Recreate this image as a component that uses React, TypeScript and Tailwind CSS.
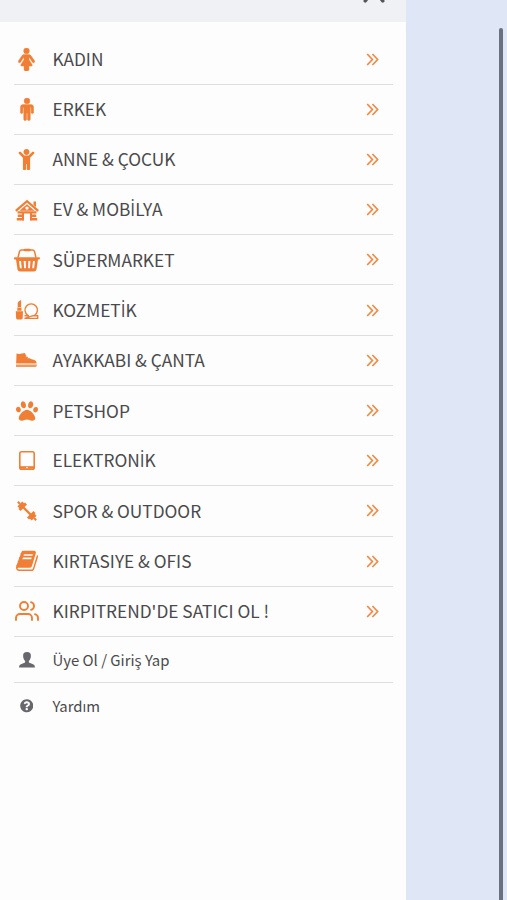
import { Fragment, type ReactNode } from 'react';
import { FaChild, FaPaw, FaQuestionCircle } from 'react-icons/fa';

const head = (cx: number) => <circle cx={cx} cy="224" r="224" />;

const Female = () => (
  <svg viewBox="0 0 1280 1792" className="h-[23px] w-[17px]" fill="currentColor" stroke="currentColor" strokeWidth="30">
    <path d="M1280 1056q0 40-28 68t-68 28q-51 0-80-43L877 768h-45v132l247 411q9 15 9 33 0 26-19 45t-45 19H832v272q0 46-33 79t-79 33H560q-46 0-79-33t-33-79v-272H256q-26 0-45-19t-19-45q0-18 9-33l247-411V768h-45l-227 341q-29 43-80 43-40 0-68-28t-28-68q0-29 16-53l256-384q73-107 176-107h384q103 0 176 107l256 384q16 24 16 53z" />
    {head(640)}
  </svg>
);

const Male = () => (
  <svg viewBox="0 0 1024 1792" className="h-[23px] w-[14px]" fill="currentColor" stroke="currentColor" strokeWidth="30">
    <path d="M1024 704v416q0 40-28 68t-68 28-68-28-28-68V736h-64v912q0 46-33 79t-79 33-79-33-33-79v-464h-64v464q0 46-33 79t-79 33-79-33-33-79V736h-64v384q0 40-28 68t-68 28-68-28-28-68V704q0-80 56-136t136-56h640q80 0 136 56t56 136z" />
    {head(512)}
  </svg>
);

const House = () => (
  <svg viewBox="0 0 24 22" className="h-[22px] w-6" fill="none" stroke="currentColor">
    <path d="M.8 11.800L12 2.200l11.200 9.600" strokeWidth="2.200" />
    <path d="M18.500 2.500H21v5.500l-2.500-2z" fill="currentColor" stroke="none" />
    <path fill="currentColor" stroke="none" fillRule="evenodd" d="M12 5.200l7.600 6.600H4.400zM12 7.400a1.700 1.700 0 1 0 0 3.400 1.700 1.700 0 1 0 0-3.400z" />
    <path d="M2.500 13.400h19M2.800 16.800H9m6 0h6.200M1.800 20.200H9m6 0h7.200" strokeWidth="2.400" />
    <path d="M8 13v8.300M16 13v8.300" strokeWidth="2" />
  </svg>
);

const Basket = () => (
  <svg viewBox="0 0 26 24" className="h-6 w-[26px]" fill="none" stroke="currentColor">
    <path d="M4 9.500L5.500 3.500Q6 2 7.500 2h11q1.500 0 2 1.500l1.500 6" strokeWidth="1.500" />
    <path d="M11 2h4.500" strokeWidth="2.600" strokeLinecap="round" />
    <path fill="currentColor" stroke="none" fillRule="evenodd" d="M1 9.300h24q1 0 1 1.100t-1 1.200h-1l-1.500 9.900Q22 23.500 20 23.500H6q-2 0-2.500-2L2 11.600H1q-1 0-1-1.200t1-1.100zM5 13l.9 7.200h1.900L7 13zM9.700 13l.4 7.200H12l-.2-7.200zM14.300 13l-.2 7.200H16l.4-7.200zM19 13l-.8 7.200h1.900l.9-7.200z" />
  </svg>
);

const Cosmetics = () => (
  <svg viewBox="0 0 24 20" className="h-5 w-6" fill="none" stroke="currentColor">
    <path d="M2.700 7V3q0-1.700 3.400-3v7zM2.300 7.600h4.200v3.200H2.300zM.8 11.300H8l-.3 6.700q-.2 1.500-1.700 1.500H2.800q-1.500 0-1.700-1.500z" fill="currentColor" stroke="none" />
    <path d="M12.800 15.300a6.200 6.200 0 1 1 6.800 0M9.500 15.700h4.500m4 0h4.700v2.700H9.500z" strokeWidth="1.400" />
  </svg>
);

const Shoe = () => (
  <svg viewBox="0 0 21 15" className="mr-[1px] h-[15px] w-[21px]" fill="currentColor">
    <path d="M.5.500Q2.500 1.300 4.500.700L8.800 0q.5 1.500 1.800 3l-1 .7.400.400 1.300-.6 1 .9-1 .7.500.400 1.200-.5q2.500 1.600 5.500 1.900 2 .5 2.200 3.700H0L.3 7.500z" />
    <path d="M0 11h20.700v1.400q0 1.600-1.600 1.600H0z" opacity=".8" />
    <path d="M0 11.300h20.500" stroke="white" strokeWidth=".6" />
  </svg>
);

const Tablet = () => (
  <svg viewBox="0 0 16 19" className="mb-[1px] h-[19px] w-4" fill="none" stroke="currentColor">
    <rect x=".8" y=".8" width="14.400" height="17.400" rx="1.800" strokeWidth="1.600" />
    <path d="M1 16.500h14" strokeWidth="2.600" />
    <path d="M7 16.600h2" stroke="white" strokeWidth=".9" />
  </svg>
);

const Dumbbell = () => (
  <svg viewBox="0 0 20 20" className="size-5" fill="none" stroke="currentColor">
    <path d="M4 4l12 12" strokeWidth="2.300" />
    <path d="M2.500 9L9 2.500M11 17.500l6.500-6.500" strokeWidth="2.900" />
    <path d="M1.600 6.400L6.400 1.600M13.600 18.400l4.800-4.800" strokeWidth="3.200" />
    <path d="M.8.800L3 3M17 17l2.200 2.200" strokeWidth="2" />
  </svg>
);

const Book = () => (
  <svg viewBox="0 0 1664 1664" className="size-[22px]" fill="currentColor">
    <path fillRule="evenodd" d="M1639 410q40 57 18 129l-275 906q-19 64-76.500 107.500T1183 1596H260q-77 0-148.500-53.500T12 1411q-24-67-2-127 0-4 3-27t4-37q1-8-3-21.500t-3-19.500q2-11 8-21t16.500-23.500T52 1111q23-38 45-91.500t30-91.500q3-10 .5-30t-.5-28q3-11 17-28t17-23q21-36 42-92t25-90q1-9-2.500-32t.5-28q4-13 22-30.500t22-22.500q19-26 42.500-84.500T340 343q1-8-3-25.500t-2-26.500q2-8 9-18t18-23 17-21q8-12 16.500-30.500t15-35 16-36 19.500-32 26.500-23.500 36-11.500 47.500 5.500l-1 3q38-9 51-9h761q74 0 114 56t18 130l-274 906q-36 119-71.500 153.500T1025 1340H156q-27 0-38 15-11 16-1 43 24 70 144 70h923q29 0 56-15.500t35-41.500l300-987q7-22 5-57 38 15 59 43zM575 412q-4 13 2 22.500t20 9.500h608q13 0 25.500-9.500T1247 412l21-64q4-13-2-22.500t-20-9.500H638q-13 0-25.500 9.500T596 348zm-83 256q-4 13 2 22.500t20 9.500h608q13 0 25.500-9.500T1164 668l21-64q4-13-2-22.500t-20-9.500H555q-13 0-25.500 9.500T513 604z" />
  </svg>
);

const Users = () => (
  <svg viewBox="0 0 24 24" className="size-6" fill="none" stroke="currentColor" strokeWidth="1.900" strokeLinecap="round" strokeLinejoin="round">
    <path d="M17 21v-2a4 4 0 0 0-4-4H5a4 4 0 0 0-4 4v2M23 21v-2a4 4 0 0 0-3-3.870M16 3.130a4 4 0 0 1 0 7.750" />
    <circle cx="9" cy="7" r="4" />
  </svg>
);

const Person = () => (
  <svg viewBox="0 0 16 16" className="size-4" fill="currentColor">
    <path d="M8 0C5.300 0 3.900 1.500 4.100 4c.1 2 .8 3.700 2 4.900.2 1.300-.1 1.800-1.200 2.200L2 12.200C.7 12.700.1 13.500.1 15.500h15.800c0-2-.6-2.800-1.900-3.300l-2.900-1.100c-1.100-.4-1.400-.9-1.200-2.200 1.200-1.200 1.900-2.900 2-4.900C12.100 1.500 10.700 0 8 0z" />
  </svg>
);

const Chevrons = () => (
  <svg viewBox="0 0 13 13" className="mr-[14.500px] size-[13px] text-[#f08a45]" fill="none" stroke="currentColor" strokeWidth="1.700">
    <path d="M1.200 1l5.200 5.500L1.200 12M6.400 1l5.200 5.500L6.400 12" />
  </svg>
);

// The CJK family has no dotted capital I, so that letter is set in Open Sans.
const Label = ({ text }: { text: string }) => (
  <>
    {text.split('İ').map((part, i) => (
      <Fragment key={i}>
        {i > 0 && <span className="font-['Open_Sans',sans-serif]">İ</span>}
        {part}
      </Fragment>
    ))}
  </>
);

const categories: { label: string; icon: ReactNode }[] = [
  { label: 'KADIN', icon: <Female /> },
  { label: 'ERKEK', icon: <Male /> },
  { label: 'ANNE & ÇOCUK', icon: <FaChild size={21} /> },
  { label: 'EV & MOBİLYA', icon: <House /> },
  { label: 'SÜPERMARKET', icon: <Basket /> },
  { label: 'KOZMETİK', icon: <Cosmetics /> },
  { label: 'AYAKKABI & ÇANTA', icon: <Shoe /> },
  { label: 'PETSHOP', icon: <FaPaw size={22} /> },
  { label: 'ELEKTRONİK', icon: <Tablet /> },
  { label: 'SPOR & OUTDOOR', icon: <Dumbbell /> },
  { label: 'KIRTASIYE & OFIS', icon: <Book /> },
  { label: "KIRPITREND'DE SATICI OL !", icon: <Users /> },
];

export default function App() {
  return (
    <div className="flex h-[900px] w-[507px] overflow-hidden bg-[#dfe6f6] font-['Noto_Sans_CJK_SC','Open_Sans',sans-serif] text-[#4a4a4c]">
      <aside className="flex w-[406px] flex-col bg-[#fdfdfd]">
        <header className="flex h-[22px] shrink-0 items-start justify-end bg-[#f0f1f5] pr-5">
          <svg viewBox="0 0 24 4" className="h-1 w-6" fill="none" stroke="#55565a" strokeWidth="3.400" strokeLinecap="round">
            <path d="M5.500-2L3.200 1M18.500-2L20.800 1" />
          </svg>
        </header>
        <nav className="ml-[13.500px] mr-[13px] mt-[12.400px]">
          {categories.map(({ label, icon }) => (
            <div key={label} className="flex h-[50.220px] items-center border-b-[1.500px] border-[#dedee1]">
              <span className="flex w-[26px] shrink-0 justify-center text-[#f07f35]">{icon}</span>
              <span className="ml-[13px] flex-1 whitespace-nowrap text-[17.300px] leading-6"><Label text={label} /></span>
              <Chevrons />
            </div>
          ))}
          <div className="flex h-[46px] items-center border-b-[1.500px] border-[#dedee1]">
            <span className="flex w-[26px] justify-center text-[#67676d]"><Person /></span>
            <span className="ml-[13px] text-[14.900px] leading-6">Üye Ol / Giriş Yap</span>
          </div>
          <div className="flex h-[46px] items-center">
            <span className="flex w-[26px] justify-center text-[#67676d]"><FaQuestionCircle size={13.5} /></span>
            <span className="ml-[13px] text-[14.900px] leading-6">Yardım</span>
          </div>
        </nav>
      </aside>
      <div className="flex flex-1 justify-end pr-1 pt-7">
        <div className="w-1 rounded-t-full bg-[#68727f]" />
      </div>
    </div>
  );
}
